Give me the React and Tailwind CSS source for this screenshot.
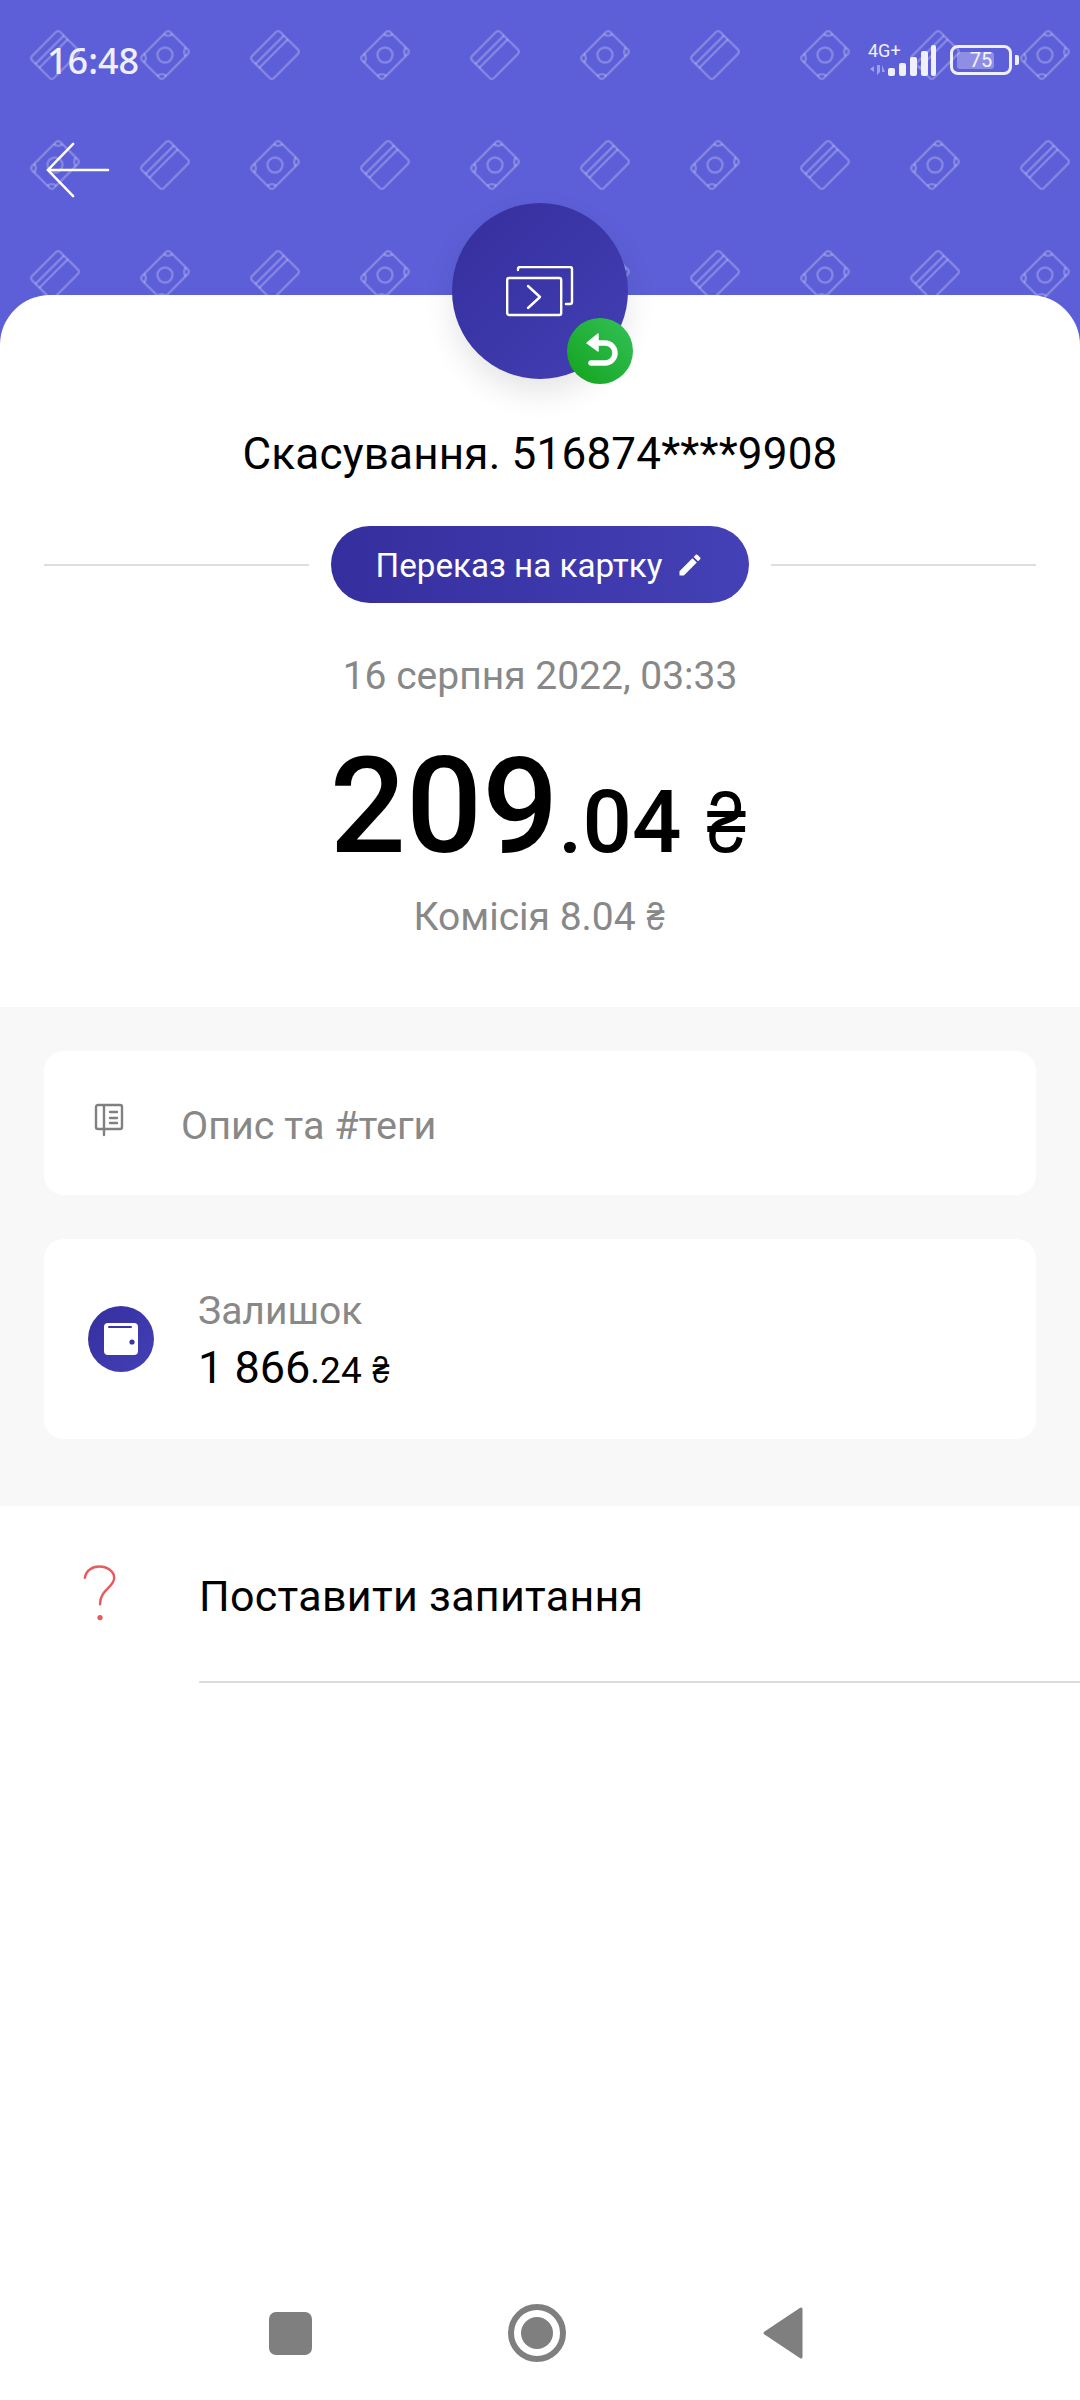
import React from 'react';

const CardGlyph = ({ x, y }) => (
  <g transform={`translate(${x} ${y}) rotate(-45)`}>
    <rect x="-20" y="-15.5" width="40" height="31" rx="3" />
    <path d="M-20 -7.5H20M-20 -2H20" />
  </g>
);

const MoneyGlyph = ({ x, y }) => (
  <g transform={`translate(${x} ${y}) rotate(-45)`}>
    <rect x="-20" y="-15.5" width="40" height="31" rx="3" />
    <circle cx="0" cy="0" r="7.5" />
    <path d="M-20 -9.5a6 6 0 0 0 6 -6M20 -9.5a6 6 0 0 1 -6 -6M-20 9.5a6 6 0 0 1 6 6M20 9.5a6 6 0 0 0 -6 6" />
  </g>
);

const HeaderPattern = () => (
  <svg className="absolute inset-0 w-full h-full" xmlns="http://www.w3.org/2000/svg">
    <defs>
      <pattern id="tiles" width="220" height="220" patternUnits="userSpaceOnUse">
        <g fill="none" stroke="#ffffff" strokeOpacity="0.24" strokeWidth="2.4">
          <CardGlyph x={55} y={55} />
          <MoneyGlyph x={165} y={55} />
          <MoneyGlyph x={55} y={165} />
          <CardGlyph x={165} y={165} />
        </g>
      </pattern>
    </defs>
    <rect width="100%" height="100%" fill="url(#tiles)" />
  </svg>
);

const StatusBar = () => (
  <div className="relative flex items-center justify-between h-[60px] mt-[31px] pl-[47px] pr-[61px]">
    <span className="text-[36px] font-medium text-white/90 font-['Noto_Sans',sans-serif] leading-none">16:48</span>
    <div className="flex items-center -mt-[2px]">
      <div className="relative w-[68px] h-[34px]">
        <span className="absolute left-0 -top-[1px] text-[18px] leading-none text-white/90">4G+</span>
        <svg className="absolute left-0 top-0" width="68" height="34" viewBox="0 0 68 34" fill="#f0f0fb">
          <path d="M2 26l4 3v-6zM9 22v10l3-3v-7zM14 22v7h3z" opacity="0.45" />
          <rect x="20" y="25" width="7" height="8" rx="2" />
          <rect x="31" y="20" width="7" height="13" rx="2" />
          <rect x="42" y="14" width="7" height="19" rx="2" />
          <rect x="53" y="8" width="7" height="25" rx="2" />
          <rect x="63" y="2" width="5" height="31" rx="2" />
        </svg>
      </div>
      <div className="ml-[14px] relative w-[62px] h-[30px] rounded-[8px] border-[3px] border-white/90 flex items-center justify-center">
        <div className="absolute left-[4px] top-[4px] bottom-[3px] w-[37px] rounded-[3px] bg-white/30" />
        <span className="relative text-[20px] leading-none text-white/90">75</span>
      </div>
      <div className="ml-[3px] w-[4px] h-[10px] rounded-r-[2px] bg-white/90" />
    </div>
  </div>
);

const Hryvnia = ({ className }) => (
  <span className={`inline-block scale-x-[0.84] font-['Noto_Sans_CJK_SC',sans-serif] leading-none ${className}`}>₴</span>
);

export default function App() {
  return (
    <div className="w-[1080px] h-[2400px] flex flex-col bg-white overflow-hidden font-['Roboto',sans-serif] text-black">
      <header className="relative h-[345px] shrink-0 bg-[#5d5fd8]">
        <HeaderPattern />
        <StatusBar />
        <button className="relative block ml-[46px] mt-[49px]">
          <svg width="64" height="60" viewBox="0 0 66 60" fill="none" stroke="#ffffff" strokeWidth="2.6" strokeLinecap="round">
            <path d="M2 30H64M28 3L2 30L28 57" />
          </svg>
        </button>
      </header>

      <main className="relative -mt-[50px] flex-1 flex flex-col rounded-t-[50px] bg-white">
        <div className="flex flex-col items-center">
          <div className="relative -mt-[92px] w-[176px] h-[176px] rounded-full bg-gradient-to-br from-[#352e9e] to-[#4340b4] shadow-[0_14px_30px_rgba(0,0,0,0.10)] flex items-center justify-center">
            <svg className="ml-[2px] mt-[2px]" width="70" height="52" viewBox="0 0 70 52" fill="none" stroke="#ffffff" strokeWidth="2.4" strokeLinecap="round" strokeLinejoin="round">
              <path d="M12 4V3a2 2 0 0 1 2-2H64a2 2 0 0 1 2 2V36a2 2 0 0 1-2 2H60" />
              <rect x="1.2" y="12" width="54" height="37" rx="2" />
              <path d="M22 20L34 31L22 42" />
            </svg>
            <div className="absolute left-[115px] top-[115px] w-[66px] h-[66px] rounded-full bg-gradient-to-tr from-[#10a315] to-[#33c156] flex items-center justify-center">
              <svg width="66" height="66" viewBox="0 0 66 66" fill="none">
                <path d="M24 45H38a10 10 0 0 0 0-20H28" stroke="#ffffff" strokeWidth="5.5" strokeLinecap="round" />
                <path d="M31 16L20 25L31 33Z" fill="#ffffff" stroke="#ffffff" strokeWidth="1.5" strokeLinejoin="round" />
              </svg>
            </div>
          </div>

          <h1 className="mt-[50px] text-[44px] leading-[50px] font-normal tracking-[0.2px]">Скасування. 516874****9908</h1>

          <div className="mt-[47px] w-full px-[44px] flex items-center">
            <div className="flex-1 h-[2px] bg-[#dedede]" />
            <div className="mx-[22px] h-[77px] w-[418px] rounded-full bg-gradient-to-r from-[#352e9e] to-[#4441b6] flex items-center justify-center gap-[14px] text-white">
              <span className="mt-[2px] text-[33.2px] leading-none">Переказ на картку</span>
              <svg width="28" height="28" viewBox="0 0 24 24" fill="#ffffff">
                <path d="M3 17.25V21h3.75L17.81 9.94l-3.75-3.75L3 17.25zM20.71 7.04a1 1 0 0 0 0-1.41l-2.34-2.34a1 1 0 0 0-1.41 0l-1.83 1.83 3.75 3.75 1.83-1.83z" />
              </svg>
            </div>
            <div className="flex-1 h-[2px] bg-[#dedede]" />
          </div>

          <div className="mt-[51px] text-[39px] leading-[44px] text-[#888888]">16 серпня 2022, 03:33</div>

          <div className="mt-[42px] flex items-baseline leading-[134px]">
            <span className="text-[134px] font-medium">209</span>
            <span className="text-[87px] font-medium">.04</span>
            <Hryvnia className="ml-[22px] text-[84px] font-medium" />
          </div>

          <div className="mt-[6px] text-[39px] leading-[44px] text-[#888888]">
            Комісія 8.04 <Hryvnia className="text-[38px]" />
          </div>
        </div>

        <section className="mt-[68px] bg-[#f8f8f8] px-[44px] pt-[44px] pb-[67px] flex flex-col gap-[44px]">
          <div className="h-[144px] rounded-[20px] bg-white flex items-center">
            <svg className="ml-[50px] -mt-[8px]" width="30" height="36" viewBox="0 0 30 36" fill="none" stroke="#808080" strokeWidth="2.4" strokeLinecap="round" strokeLinejoin="round">
              <path d="M10 4H26a2 2 0 0 1 2 2V26a2 2 0 0 1-2 2H10M10 4H4a2 2 0 0 0-2 2V26a2 2 0 0 0 2 2H10M10 4V34M16 11H23M16 17H23M16 22H23" />
            </svg>
            <span className="ml-[57px] mt-[6px] text-[39.5px] text-[#888888]">Опис та #теги</span>
          </div>

          <div className="h-[200px] rounded-[20px] bg-white flex items-center">
            <div className="ml-[44px] w-[66px] h-[66px] rounded-full bg-gradient-to-br from-[#352e9e] to-[#4441b6] flex items-center justify-center">
              <svg width="34" height="32" viewBox="0 0 34 32">
                <rect x="0" y="0" width="34" height="32" rx="4" fill="#ffffff" />
                <path d="M5 4H27" stroke="#3a34a6" strokeWidth="2" strokeLinecap="round" />
                <circle cx="28" cy="19" r="2.6" fill="#3a34a6" />
              </svg>
            </div>
            <div className="ml-[44px] pt-[4px] flex flex-col">
              <span className="text-[39px] leading-[56px] text-[#888888]">Залишок</span>
              <span className="text-[45px] leading-[57px] flex items-baseline">
                1 866<span className="text-[37px]">.24</span>
                <Hryvnia className="ml-[9px] text-[36px]" />
              </span>
            </div>
          </div>
        </section>

        <div className="flex items-stretch">
          <div className="w-[199px] shrink-0 pl-[83px] pt-[58px]">
            <svg width="34" height="58" viewBox="0 0 36 60" fill="none" stroke="#e85a5f" strokeWidth="2.6" strokeLinecap="round">
              <path d="M2 14C3 6 10 2 17 2C26 2 33 7 33 14C33 24 18 26 18 42" />
              <circle cx="18" cy="56" r="2.8" fill="#e85a5f" stroke="none" />
            </svg>
          </div>
          <div className="flex-1 h-[177px] border-b-2 border-[#dcdcdc] flex items-center">
            <span className="mt-[6px] text-[43px] tracking-[0.3px]">Поставити запитання</span>
          </div>
        </div>

        <nav className="mt-auto h-[134px] flex items-center">
          <div className="ml-[269px] w-[43px] h-[43px] rounded-[7px] bg-[#7f7f7f]" />
          <div className="ml-[196px] w-[58px] h-[58px] rounded-full border-[6px] border-[#7f7f7f] flex items-center justify-center">
            <div className="w-[32px] h-[32px] rounded-full bg-[#7f7f7f]" />
          </div>
          <svg className="ml-[196px]" width="42" height="54" viewBox="0 0 42 54">
            <path d="M39 3V51L3 27Z" fill="#7f7f7f" stroke="#7f7f7f" strokeWidth="3" strokeLinejoin="round" />
          </svg>
        </nav>
      </main>
    </div>
  );
}
